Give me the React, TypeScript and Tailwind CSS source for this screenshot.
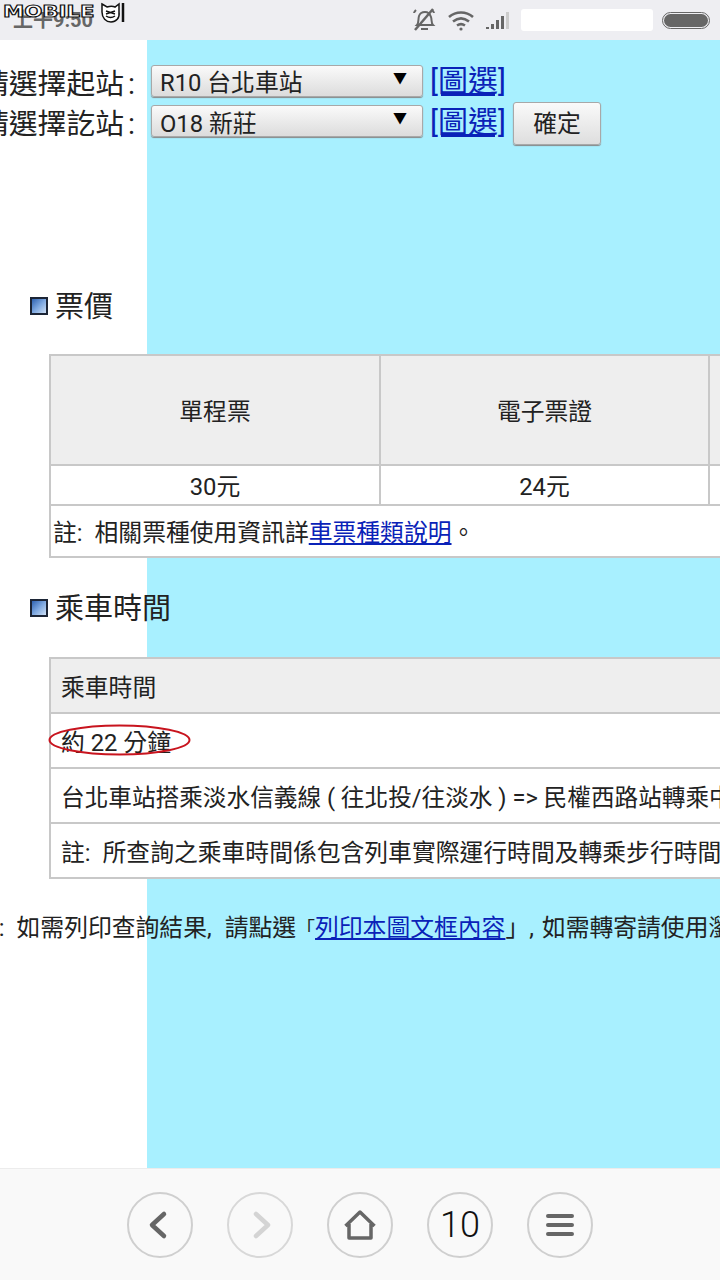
import React from "react";

const Arrow = () => <span className="absolute right-[15px] top-[2px] text-[14px] leading-[20px] text-black">▼</span>;

function Sel({ text, low }: { text: string; low?: boolean }) {
  return (
    <div className={`relative h-[32px] w-[272px] shrink-0 rounded-[3px] border border-[#a8a8a8] bg-gradient-to-b from-[#fafafa] to-[#dcdcdc] pl-[8px] text-[23.8px] text-[#222] shadow-[0_1px_1px_#888] ${low ? "leading-[36px]" : "leading-[34px]"}`}>
      {text}
      <Arrow />
    </div>
  );
}

function Heading({ text }: { text: string }) {
  return (
    <div className="ml-[30px] flex h-[40px] items-center gap-[7px]">
      <span className="h-[18px] w-[18px] border-2 border-[#1c2536] bg-gradient-to-br from-[#2f62b0] via-[#7ea8e0] to-[#cfe0f5]" />
      <span className="pt-[2px] text-[29px] leading-[40px] text-[#222]">{text}</span>
    </div>
  );
}

const A = ({ children, big }: { children: React.ReactNode; big?: boolean }) => (
  <a className={big ? "text-[30px] leading-[32px] text-[#0a22b8] underline" : "text-[#0a22b8] underline"}>{children}</a>
);

const Note = () => <span className="mr-[12px]">註:</span>;

const cell = "border-2 border-[#c8c8c8] pt-[4px] text-center font-normal leading-[30px]";
const row = "h-[55px] border-2 border-[#c8c8c8] pl-[10px] pt-[4px] text-left font-normal whitespace-nowrap leading-[30px]";

export default function App() {
  return (
    <div
      className="relative flex h-[1280px] w-[720px] flex-col overflow-hidden bg-white text-[23.8px] text-[#222]"
      style={{ fontFamily: '"Roboto", "Noto Sans CJK TC", sans-serif' }}
    >
      {/* status bar */}
      <div className="relative flex h-[40px] shrink-0 items-center bg-[#eeeef2] pr-[10px]">
        <span className="ml-[13px] text-[20px] font-bold leading-[40px] text-[#666]">上午9:50</span>
        <div className="ml-auto flex items-center">
          <svg width="28" height="28" viewBox="0 0 28 28" fill="none" stroke="#666" strokeWidth="2">
            <path d="M7 19c2-2 1-6 2-9 1-3 4-4 6-4 3 0 5 2 6 5 1 3 0 6 2 8H7z" />
            <path d="M4 7c0-1 1-2 2-3M24 7c0-1-1-2-2-3M11 23h7" />
            <path d="M5 24 23 3" strokeWidth="2.5" />
          </svg>
          <svg className="ml-[9px]" width="28" height="24" viewBox="0 0 28 24" fill="none" stroke="#666" strokeWidth="2.6">
            <path d="M2 9c7-6 17-6 24 0M6 13.5c5-4 11-4 16 0M10 17.5c3-2 5-2 8 0" />
            <circle cx="14" cy="21" r="1.6" fill="#666" stroke="none" />
          </svg>
          <svg className="ml-[10px]" width="25" height="20" viewBox="0 0 25 20">
            <rect x="1" y="17" width="3" height="2" fill="#666" />
            <rect x="6" y="14" width="3" height="5" fill="#666" />
            <rect x="11" y="10" width="3" height="9" fill="#666" />
            <rect x="16" y="6" width="3" height="13" fill="#666" />
            <rect x="21" y="2" width="3" height="17" fill="#ccc" />
          </svg>
          <span className="ml-[11px] h-[22px] w-[132px] rounded-[3px] bg-white" />
          <span className="ml-[9px] flex h-[17px] w-[48px] items-center justify-center rounded-full border border-[#666]">
            <span className="h-[13px] w-[44px] rounded-full bg-[#666]" />
          </span>
        </div>
        {/* watermark */}
        <div className="absolute left-[3px] top-[1px] flex items-center">
          <span className="block h-[24px] w-[97px]">
            <span
              className="block origin-left scale-x-[1.42] text-[15px] font-bold leading-[22px] text-white [-webkit-text-stroke:1px_#111]"
              style={{ fontFamily: '"DejaVu Sans", sans-serif' }}
            >
              MOBILE
            </span>
          </span>
          <svg width="26" height="24" viewBox="0 0 26 24" fill="#fff" stroke="#111" strokeWidth="1.5">
            <path d="M2 3l5 3c3-1 6-1 8 0l4-3v8c1 6-3 10-8 10S2 17 2 11z" />
            <path d="M6 10l9 3M15 10l-9 3M6 15c3 2 6 2 9 0" fill="none" />
            <path d="M23 2v19" strokeWidth="2.5" />
          </svg>
        </div>
      </div>

      {/* page */}
      <div className="min-h-0 flex-1 bg-[linear-gradient(to_right,#fff_147px,#a8f0ff_147px)] pt-[25px]">
        <div className="-ml-[20px] flex h-[32px] items-center whitespace-nowrap">
          <span className="w-[171px] shrink-0 pt-[5px] text-[28.8px] leading-[32px]">請選擇起站<span className="ml-[4px]">:</span></span>
          <Sel text="R10 台北車站" />
          <span className="ml-[7px] pt-[5px]"><A big>[圖選]</A></span>
        </div>
        <div className="-ml-[20px] mt-[8px] flex h-[32px] items-center whitespace-nowrap">
          <span className="w-[171px] shrink-0 pt-[5px] text-[28.8px] leading-[32px]">請選擇訖站<span className="ml-[4px]">:</span></span>
          <Sel text="O18 新莊" low />
          <span className="ml-[7px] pt-[7px]"><A big>[圖選]</A></span>
          <button className="ml-[7px] mt-[5px] h-[43px] w-[88px] rounded-[3px] border border-[#a8a8a8] bg-gradient-to-b from-[#fafafa] to-[#dedede] pt-[3px] text-[23.8px] text-[#222] shadow-[0_1px_1px_#888]">
            確定
          </button>
        </div>

        <div className="mt-[149px]"><Heading text="票價" /></div>

        <table className="ml-[49px] mt-[28px] w-[800px] table-fixed border-collapse bg-white">
          <colgroup>
            <col className="w-[330px]" />
            <col className="w-[329px]" />
            <col className="w-[141px]" />
          </colgroup>
          <tbody>
            <tr className="h-[110px] bg-[#eeeeee]">
              <th className={cell}>單程票</th>
              <th className={cell}>電子票證</th>
              <th className={cell}></th>
            </tr>
            <tr className="h-[40px]">
              <td className={cell}>30元</td>
              <td className={cell}>24元</td>
              <td className={cell}></td>
            </tr>
            <tr className="h-[52px]">
              <td colSpan={3} className="border-2 border-[#c8c8c8] pl-[2px] pt-[4px] text-left leading-[30px] whitespace-nowrap">
                <Note />相關票種使用資訊詳<A>車票種類說明</A>。
              </td>
            </tr>
          </tbody>
        </table>

        <div className="mt-[30px]"><Heading text="乘車時間" /></div>

        <table className="ml-[49px] mt-[29px] w-[800px] table-fixed border-collapse bg-white">
          <tbody>
            <tr className="bg-[#eeeeee]"><th className={row}>乘車時間</th></tr>
            <tr>
              <td className={`${row} relative`}>
                約 22 分鐘
                <svg className="absolute -left-[3px] top-[10px]" width="143" height="32" viewBox="0 0 143 32" fill="none">
                  <ellipse cx="71.5" cy="16" rx="70" ry="14.5" stroke="#c8141e" strokeWidth="2" />
                </svg>
              </td>
            </tr>
            <tr><td className={`${row} text-[23.65px]`}>台北車站搭乘淡水信義線 ( 往北投/往淡水 ) =&gt; 民權西路站轉乘中和新蘆線</td></tr>
            <tr><td className={row}><Note />所查詢之乘車時間係包含列車實際運行時間及轉乘步行時間</td></tr>
          </tbody>
        </table>

        <div className="-ml-[25px] mt-[33px] whitespace-nowrap leading-[32px]">
          <Note />如需列印查詢結果,<span className="ml-[13px]">請點選</span><span className="text-[19px]">「</span><A>列印本圖文框內容</A>」,<span className="ml-[8px]">如需轉寄請使用瀏覽器功能</span>
        </div>
      </div>

      {/* bottom bar */}
      <div className="flex h-[112px] shrink-0 items-center justify-center gap-[34px] border-t border-[#ececec] bg-[#f9f9f9]">
        <span className="flex h-[66px] w-[66px] items-center justify-center rounded-full border-2 border-[#cfcfcf]">
          <svg width="32" height="32" viewBox="0 0 32 32" fill="none" stroke="#666" strokeWidth="4.5" strokeLinecap="round" strokeLinejoin="round"><path d="M20 5 8 16l12 11" /></svg>
        </span>
        <span className="flex h-[66px] w-[66px] items-center justify-center rounded-full border-2 border-[#d8d8d8]">
          <svg width="32" height="32" viewBox="0 0 32 32" fill="none" stroke="#d4d4d4" strokeWidth="4.5" strokeLinecap="round" strokeLinejoin="round"><path d="m12 5 12 11-12 11" /></svg>
        </span>
        <span className="flex h-[66px] w-[66px] items-center justify-center rounded-full border-2 border-[#cfcfcf]">
          <svg width="34" height="32" viewBox="0 0 34 32" fill="none" stroke="#666" strokeWidth="3.5" strokeLinejoin="round"><path d="M2.5 17 17 3l14.5 14M6 15v14h22V15" /></svg>
        </span>
        <span className="flex h-[66px] w-[66px] items-center justify-center rounded-full border-2 border-[#cfcfcf] text-[36px] font-light leading-none text-[#111]">10</span>
        <span className="flex h-[66px] w-[66px] items-center justify-center rounded-full border-2 border-[#cfcfcf]">
          <svg width="28" height="26" viewBox="0 0 28 26" fill="none" stroke="#666" strokeWidth="4" strokeLinecap="round"><path d="M2 4h24M2 13h24M2 22h24" /></svg>
        </span>
      </div>
    </div>
  );
}
